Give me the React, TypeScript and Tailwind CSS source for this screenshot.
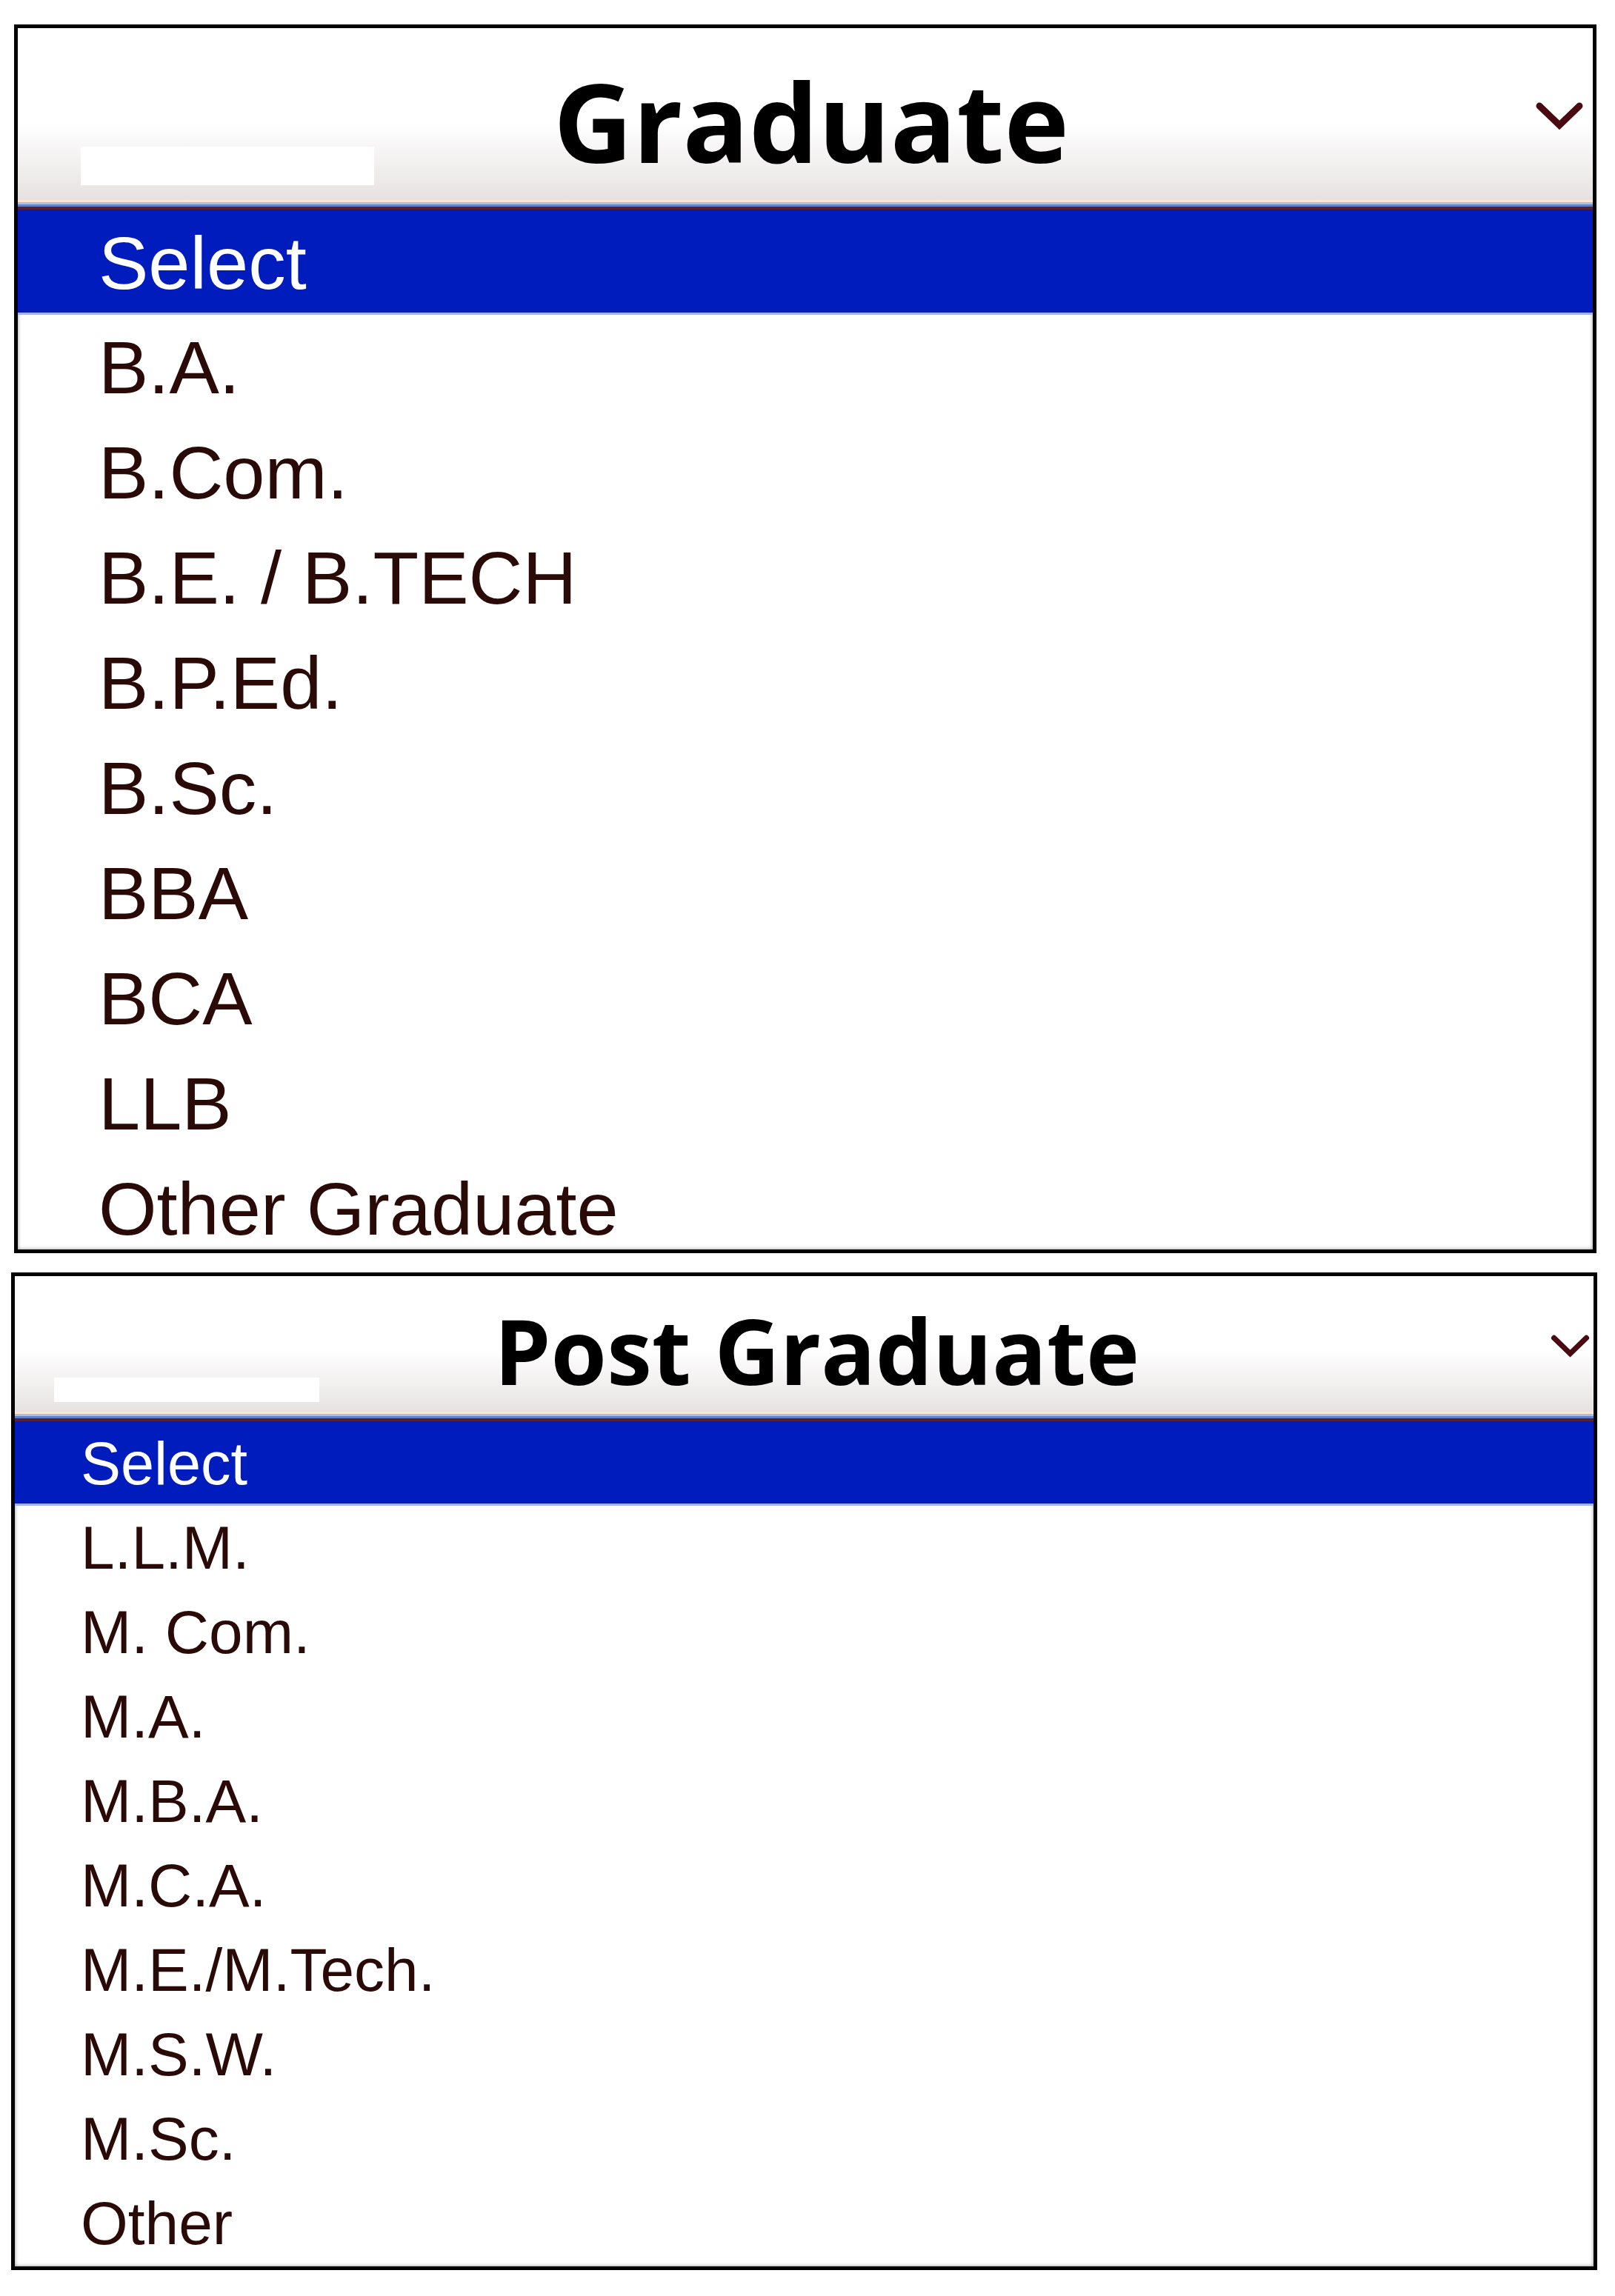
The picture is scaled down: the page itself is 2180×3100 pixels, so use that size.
import React from "react";

type Props = {
  title: string;
  items: string[];
  boxClass: string;
  headerClass: string;
  titleClass: string;
  selectClass: string;
  rowClass: string;
  patchClass: string;
  chevronClass: string;
};

function Chevron({ className }: { className: string }) {
  return (
    <svg className={className} viewBox="0 0 66 42" fill="none">
      <polyline
        points="6,8 33,34 60,8"
        stroke="#4a0a12"
        strokeWidth="9"
        strokeLinecap="round"
        strokeLinejoin="miter"
      />
    </svg>
  );
}

function Dropdown(p: Props) {
  return (
    <div
      className={`${p.boxClass} border-black bg-white overflow-hidden flex flex-col shrink-0 shadow-[inset_0_0_5px_rgba(0,0,0,0.45)]`}
    >
      <div
        className={`${p.headerClass} relative flex items-end justify-center bg-[linear-gradient(to_bottom,#ffffff_0%,#ffffff_55%,#e7e2e2_100%)]`}
      >
        <div className={`${p.patchClass} absolute bg-white`} />
        <span
          className={`${p.titleClass} font-bold text-black leading-none`}
          style={{ fontFamily: '"Open Sans", "Noto Sans", sans-serif' }}
        >
          {p.title}
        </span>
        <Chevron className={p.chevronClass} />
      </div>
      <div className="h-[3px] shrink-0 bg-[#fde4d3]" />
      <div className="h-[3px] shrink-0 bg-[#a8c0e8]" />
      <div className="h-[3px] shrink-0 bg-[#6283c9]" />
      <div className="h-[4px] shrink-0 bg-[#5a1e33]" />
      <div
        className={`${p.selectClass} bg-[#001cbd] text-white border-b-[3px] border-[#9fb4ee]`}
        style={{ fontFamily: '"Liberation Sans", Arial, sans-serif' }}
      >
        Select
      </div>
      {p.items.map((item) => (
        <div
          key={item}
          className={`${p.rowClass} text-[#2a0a06] shrink-0 whitespace-nowrap`}
          style={{ fontFamily: '"Liberation Sans", Arial, sans-serif' }}
        >
          {item}
        </div>
      ))}
    </div>
  );
}

const graduate = [
  "B.A.",
  "B.Com.",
  "B.E. / B.TECH",
  "B.P.Ed.",
  "B.Sc.",
  "BBA",
  "BCA",
  "LLB",
  "Other Graduate",
];

const postGraduate = [
  "L.L.M.",
  "M. Com.",
  "M.A.",
  "M.B.A.",
  "M.C.A.",
  "M.E./M.Tech.",
  "M.S.W.",
  "M.Sc.",
  "Other",
];

export default function App() {
  return (
    <div className="w-[2180px] h-[3100px] bg-white flex flex-col">
      <Dropdown
        title="Graduate"
        items={graduate}
        boxClass="ml-[19px] mt-[33px] w-[2136px] h-[1659px] border-[5px]"
        headerClass="h-[232px] shrink-0 pb-[33px] pl-[16px]"
        titleClass="text-[148px]"
        selectClass="h-[142px] shrink-0 pl-[109px] pt-[3px] text-[101px] leading-[139px]"
        rowClass="h-[142px] pl-[109px] text-[101px] leading-[142px]"
        patchClass="left-[85px] top-[160px] w-[396px] h-[52px]"
        chevronClass="absolute left-[2048px] top-[97px] w-[66px] h-[42px]"
      />
      <Dropdown
        title="Post Graduate"
        items={postGraduate}
        boxClass="ml-[15px] mt-[26px] w-[2141px] h-[1347px] border-[5px]"
        headerClass="h-[183px] shrink-0 pb-[22px] pl-[34px]"
        titleClass="text-[122px]"
        selectClass="h-[114px] shrink-0 pl-[89px] pt-[2px] text-[81px] leading-[111px]"
        rowClass="h-[114px] pl-[89px] text-[82px] leading-[114px]"
        patchClass="left-[53px] top-[137px] w-[358px] h-[33px]"
        chevronClass="absolute left-[2072px] top-[77px] w-[55px] h-[34px]"
      />
    </div>
  );
}
